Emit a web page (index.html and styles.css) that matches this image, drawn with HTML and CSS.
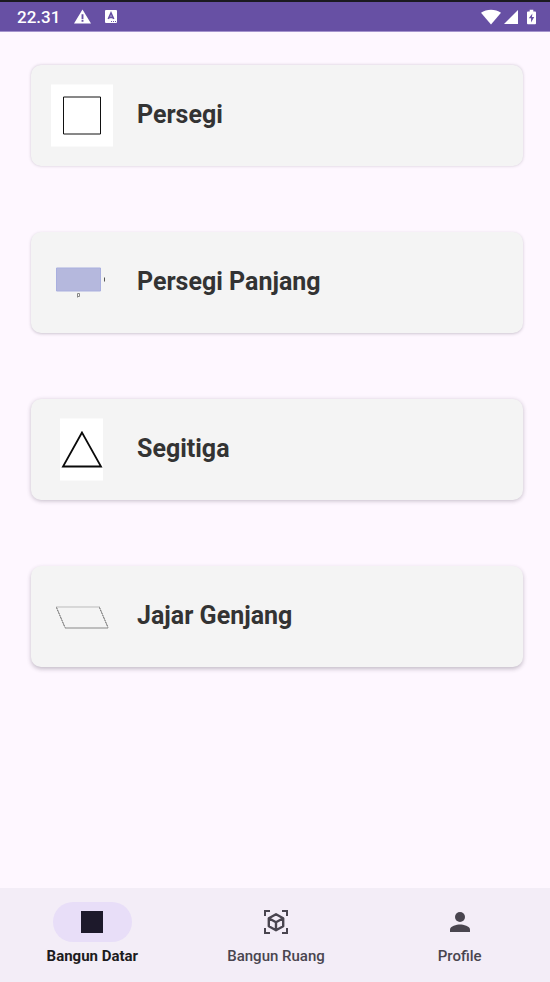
FILE: index.html
```html
<!DOCTYPE html>
<html lang="id">
<head>
<meta charset="utf-8">
<meta name="viewport" content="width=device-width, initial-scale=1">
<title>Bangun Datar</title>
<link rel="stylesheet" href="styles.css">
</head>
<body>
<header class="status">
  <div class="status-group">
    <span class="clock">22.31</span>
    <svg class="warning" width="17" height="16" viewBox="0 0 18 16"><path fill="#fff" fill-rule="evenodd" d="M9 0 18 15H0zM8 5v5h2V5zM8 11v2h2v-2z"/></svg>
    <svg width="12" height="14" viewBox="0 0 12 14"><rect width="12" height="13" y="0" rx="1" fill="#fff"/><path d="M3.300 9 6 3l2.700 6M4.200 7.300h3.600" fill="none" stroke="#6750a4" stroke-width="1.700"/><path d="M6 11.500h1m1 0h1m1 0h1" stroke="#6750a4"/></svg>
  </div>
  <div class="status-group status-right">
    <svg width="20" height="16" viewBox="0 0 20 16"><path fill="#fff" d="M0 3.800C5.500-.3 14.500-.3 20 3.800L10 15.500z"/></svg>
    <svg width="14" height="16" viewBox="0 0 14 16"><path fill="#fff" d="M14 1v14H0z"/></svg>
    <svg class="battery" width="9" height="16" viewBox="0 0 10 16"><path fill="#fff" d="M3 0h4v2h2q1 0 1 1v12q0 1-1 1H1q-1 0-1-1V3q0-1 1-1h2z"/><path fill="#6750a4" d="M6 4 2 9.500h2.500V14L8 8H5.500z"/></svg>
  </div>
</header>
<main class="list">
  <article class="card card-1">
    <svg class="thumb" viewBox="0 0 62 62"><path fill="#fff" d="M0 0h62v62H0z"/><path d="M12.500 12.500h37v37h-37z" fill="none" stroke="#111"/></svg>
    <h2>Persegi</h2>
  </article>
  <article class="card card-2">
    <svg class="thumb" viewBox="0 0 62 62"><path d="M5.500 16.500h44v23h-44z" fill="#b5b8dd" stroke="#a9afdf"/><path d="M53.500 26v4" stroke="#555"/><path d="M26.500 46v-4h2v3h-2" fill="none" stroke="#888"/></svg>
    <h2>Persegi Panjang</h2>
  </article>
  <article class="card card-3">
    <svg class="thumb" viewBox="0 0 62 62"><path fill="#fff" d="M9 0h43v62H9z"/><path d="M31 14 12 48h38z" fill="none" stroke="#0a0a0a" stroke-width="1.800"/></svg>
    <h2>Segitiga</h2>
  </article>
  <article class="card card-4">
    <svg class="thumb" viewBox="0 0 62 62"><path d="M5 21.500h44" stroke="#bbb"/><path d="M14 42.500h43" stroke="#888"/><path d="m5.500 22 8.500 20M48.500 22 57 42" stroke="#333" stroke-width=".8" stroke-dasharray="2 .6"/></svg>
    <h2>Jajar Genjang</h2>
  </article>
</main>
<nav class="nav">
  <a class="nav-item active" href="#datar" aria-current="page">
    <span class="pill"><svg width="32" height="32" viewBox="0 0 32 32"><path fill="#1d192b" d="M5 5h22v22H5z"/></svg></span>
    <span>Bangun Datar</span>
  </a>
  <a class="nav-item" href="#ruang">
    <span class="pill"><svg width="32" height="32" viewBox="0 0 32 32" fill="none" stroke="#49454f" stroke-width="2"><path d="M5 10V5h5M22 5h5v5M27 22v5h-5M10 27H5v-5"/><path stroke-width="2.400" stroke-linejoin="round" d="m16 8.300 7.200 4v8L16 24.300l-7.200-4v-8zM8.800 12.300l7.200 4 7.200-4M16 16.300v8"/></svg></span>
    <span>Bangun Ruang</span>
  </a>
  <a class="nav-item" href="#profile">
    <span class="pill"><svg width="32" height="32" viewBox="0 0 32 32" fill="#49454f"><circle cx="16" cy="11" r="5"/><path d="M6 26v-2.500c0-3.300 6.700-5 10-5s10 1.700 10 5V26z"/></svg></span>
    <span>Profile</span>
  </a>
</nav>
</body>
</html>
```
FILE: styles.css
```css
* { box-sizing: border-box; }
body {
  margin: 0;
  min-height: 100vh;
  display: flex;
  flex-direction: column;
  background: #fef7ff;
  font-family: Roboto, "Liberation Sans", sans-serif;
}
svg { display: block; flex: none; }
.status {
  display: flex;
  justify-content: space-between;
  align-items: center;
  height: 32px;
  padding: 0 14px 0 17px;
  border-top: 2px solid #1b1a20;
  border-bottom: 1px solid #a493cd;
  background: #6750a4;
  color: #fff;
}
.status-group { display: flex; align-items: center; gap: 14px; }
.status-right { gap: 3px; }
.battery { margin-left: 6px; }
.clock { font-size: 17px; line-height: 20px; font-weight: 500; }
.list {
  flex: 1;
  display: flex;
  flex-direction: column;
  gap: 66px;
  padding: 33px 27px 33px 31px;
}
.card {
  display: flex;
  align-items: center;
  gap: 24px;
  padding: 19px 20px;
  border-radius: 10px;
  background: #f4f4f4;
}
.card-1 { box-shadow: 0 0 3px rgba(60, 50, 70, .25); }
.card-2 { box-shadow: 0 1px 3px rgba(60, 50, 70, .25); }
.card-3 { box-shadow: 0 1px 4px rgba(60, 50, 70, .3); }
.card-4 { box-shadow: 0 2px 4px rgba(60, 50, 70, .3); }
.thumb { width: 62px; height: 63px; }
.card h2 {
  margin: 0;
  padding-bottom: 2px;
  color: #333;
  font-size: 25px;
  line-height: 30px;
  font-weight: 700;
}
.nav {
  display: flex;
  gap: 3px;
  padding: 14px 0 16px 2px;
  background: #f3edf7;
}
.nav-item {
  flex: 1;
  display: flex;
  flex-direction: column;
  align-items: center;
  gap: 4px;
  color: #49454f;
  font-size: 15px;
  line-height: 20px;
  font-weight: 500;
  text-decoration: none;
}
.pill {
  display: flex;
  align-items: center;
  justify-content: center;
  width: 79px;
  height: 40px;
  border-radius: 20px;
}
.active { color: #1d1b20; font-weight: 700; }
.active .pill { background: #e8def8; }
```
